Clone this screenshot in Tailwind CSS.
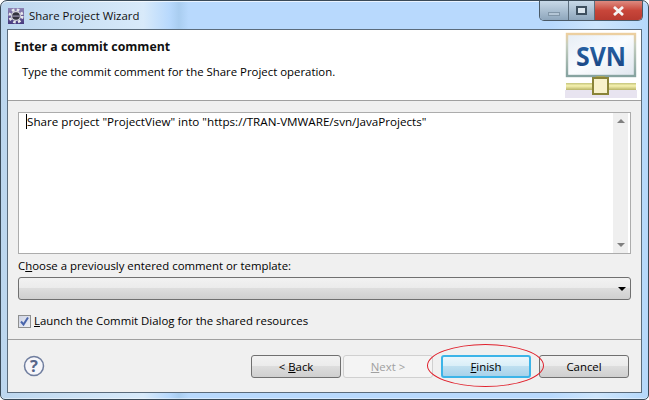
<!DOCTYPE html>
<html lang="en">
<head>
  <meta charset="UTF-8">
  <title>Share Project Wizard</title>
  <script src="https://cdn.jsdelivr.net/npm/@tailwindcss/browser@4"></script>
</head>
<body class="w-[649px] h-[400px] overflow-hidden bg-white font-['Open_Sans','Noto_Sans',sans-serif] text-[11.4px] leading-[16px] text-black">

  <!-- window frame -->
  <div class="w-[649px] h-[400px] flex flex-col rounded-t-[7px] rounded-b-[5px] border border-[#3a4a58] shadow-[inset_0_1px_0_#ffffffb0,inset_0_-1px_0_#ffffff70] bg-[linear-gradient(90deg,#bcd6ee_0%,#d8eafa_22%,#b8d9fd_26%,#a9cdf0_27.5%,#b8d9fd_29%,#b8d9fd_85%,#cde5fc_92%,#b5d8fb_100%)] px-[6px] pb-[6px]">

    <!-- title bar -->
    <div class="h-[28px] shrink-0 flex items-start">
      <svg class="mt-[7px] ml-[1px]" width="16" height="16" viewBox="0 0 16 16">
        <defs>
          <linearGradient id="iconbg" x1="0" y1="0" x2="0" y2="1"><stop offset="0" stop-color="#8e84b4"/><stop offset="1" stop-color="#46397e"/></linearGradient>
        </defs>
        <rect width="16" height="16" fill="url(#iconbg)"/>
        <circle cx="8" cy="8" r="6.3" fill="none" stroke="#e8e8ec" stroke-width="2.6" stroke-dasharray="2.6 2.35"/>
        <circle cx="8" cy="8" r="5" fill="#d4d4da"/>
        <circle cx="8" cy="8" r="3.8" fill="#34323e"/>
        <rect x="4.2" y="7.4" width="7.6" height="1.4" fill="#8a86a0"/>
      </svg>
      <span class="ml-[5px] mt-[7px] text-[#111]">Share Project Wizard</span>
      <div class="ml-auto mr-[-1px] flex h-[20px] w-[104px] rounded-b-[5px] border border-t-0 border-[#4a5a68] overflow-hidden">
        <div class="w-[29px] flex items-center justify-center bg-gradient-to-b from-[#c8d9e8] to-[#8ea6bc] border-r border-[#5c6e7e]">
          <div class="w-[12px] h-[4px] mt-[6px] bg-[#b4c6d6] border border-[#8196a8]"></div>
        </div>
        <div class="w-[26px] flex items-center justify-center bg-gradient-to-b from-[#c8d9e8] to-[#8ea6bc] border-r border-[#5c6e7e]">
          <div class="w-[11px] h-[9px] border-2 border-[#3e5060] bg-[#dce6ee]"></div>
        </div>
        <div class="flex-1 flex items-center justify-center bg-gradient-to-b from-[#dd8a80] via-[#c8463a] to-[#b83a30]">
          <svg width="13" height="10" viewBox="0 0 13 10"><path d="M2 1 L11 9 M11 1 L2 9" stroke="#f4f4f4" stroke-width="2.8"/></svg>
        </div>
      </div>
    </div>

    <!-- client area -->
    <div class="flex-1 min-h-0 flex flex-col border border-[#5b6c7c] bg-[#f0f0f0]">

      <!-- banner -->
      <div class="h-[71px] shrink-0 flex bg-white border-b border-[#a0a0a0]">
        <div class="flex-1 pl-[6px] pt-[9px]">
          <div class="font-bold text-[12.3px] text-[#111]">Enter a commit comment</div>
          <div class="ml-[8px] mt-[9px]">Type the commit comment for the Share Project operation.</div>
        </div>
        <svg class="mt-[2px] mr-[4px]" width="72" height="66" viewBox="0 0 72 66">
          <defs>
            <linearGradient id="screen" x1="0" y1="0" x2="1" y2="1"><stop offset="0" stop-color="#e6edf5"/><stop offset="0.5" stop-color="#fafcfe"/><stop offset="1" stop-color="#dfe6ee"/></linearGradient>
            <linearGradient id="frame" x1="0" y1="0" x2="0" y2="1"><stop offset="0" stop-color="#edcf9f"/><stop offset="0.25" stop-color="#c6cfc0"/><stop offset="1" stop-color="#86a3a0"/></linearGradient>
            <linearGradient id="letters" x1="0" y1="0" x2="0" y2="1"><stop offset="0" stop-color="#2c6cb0"/><stop offset="1" stop-color="#173f7c"/></linearGradient>
            <linearGradient id="bar" x1="0" y1="0" x2="0" y2="1"><stop offset="0" stop-color="#c4c47c"/><stop offset="0.4" stop-color="#f6f2b0"/><stop offset="1" stop-color="#b8b468"/></linearGradient>
          </defs>
          <rect x="0" y="58" width="72" height="8" fill="#e8e4f0"/>
          <rect x="2" y="2" width="68" height="42" fill="url(#screen)" stroke="url(#frame)" stroke-width="2.4"/>
          <text x="36" y="34" text-anchor="middle" font-family="Open Sans" font-weight="700" font-size="27" textLength="50" lengthAdjust="spacingAndGlyphs" fill="url(#letters)">SVN</text>
          <rect x="31" y="44" width="9" height="4" fill="#a8a860"/>
          <rect x="1" y="51" width="70" height="7" fill="url(#bar)"/>
          <rect x="28" y="46" width="15" height="16" fill="#f8f2cc" stroke="#8a8438" stroke-width="2"/>
        </svg>
      </div>

      <!-- form -->
      <div class="flex-1 min-h-0 px-[10px] pt-[11px]">
        <div class="h-[142px] flex bg-white border border-[#acacac]">
          <div class="flex-1 pl-[7px] pt-[1px] text-[11.65px]"><span class="border-l border-black">Share project "ProjectView" into "https://TRAN-VMWARE/svn/JavaProjects"</span></div>
          <div class="w-[15px] mr-[2px] flex flex-col justify-between items-center bg-[#efefef] py-[6px]">
            <div class="w-0 h-0 border-x-[4px] border-x-transparent border-b-[4px] border-b-[#808080]"></div>
            <div class="w-0 h-0 border-x-[4px] border-x-transparent border-t-[4px] border-t-[#808080]"></div>
          </div>
        </div>
        <div class="mt-[4px]">C<u>h</u>oose a previously entered comment or template:</div>
        <div class="mt-[3px] h-[23px] flex items-center justify-end pr-[4px] rounded-[3px] border border-[#707070] bg-[linear-gradient(#f2f2f2_0%,#ebebeb_48%,#dddddd_50%,#cfcfcf_100%)]">
          <div class="w-0 h-0 border-x-[4px] border-x-transparent border-t-[4px] border-t-black"></div>
        </div>
        <div class="mt-[13px] flex items-center">
          <div class="w-[13px] h-[13px] flex items-center justify-center border border-[#8e8f8f] bg-[linear-gradient(135deg,#cfd4e4,#eef0f6)]">
            <svg width="11" height="11" viewBox="0 0 11 11"><path d="M2 5.5 L4.5 8.5 L9 1.5" fill="none" stroke="#4a66ac" stroke-width="2"/></svg>
          </div>
          <span class="ml-[3px]"><u>L</u>aunch the Commit Dialog for the shared resources</span>
        </div>
      </div>

      <!-- button bar -->
      <div class="h-[53px] shrink-0 relative flex items-start border-t border-[#a0a0a0] pt-[15px] pl-[15px] pr-[12px]">
        <svg width="22" height="22" viewBox="0 0 22 22">
          <circle cx="11" cy="11" r="9.5" fill="#f6f6fa" stroke="#6f7d9e" stroke-width="1.5"/>
          <text x="11" y="16.8" text-anchor="middle" font-family="Open Sans" font-weight="700" font-size="16.5" fill="#56658a">?</text>
        </svg>
        <div class="ml-auto flex">
          <div class="w-[90px] h-[23px] flex items-center justify-center rounded-[3px] border border-[#707070] bg-[linear-gradient(#f2f2f2_0%,#ebebeb_48%,#dddddd_50%,#cfcfcf_100%)]">&lt; <u class="ml-[3px]">B</u>ack</div>
          <div class="ml-[2px] w-[90px] h-[23px] flex items-center justify-center rounded-[3px] border border-[#d0d0d0] bg-[#f4f4f4] text-[#a0a0a0]"><u>N</u>ext &gt;</div>
          <div class="ml-[8px] w-[90px] h-[23px] flex items-center justify-center rounded-[3px] border-2 border-[#3cb4e8] bg-[linear-gradient(#eaf6fc_0%,#d9eef8_48%,#bedff0_50%,#a8d2ea_100%)]"><u>F</u>inish</div>
          <div class="ml-[8px] w-[90px] h-[23px] flex items-center justify-center rounded-[3px] border border-[#707070] bg-[linear-gradient(#f2f2f2_0%,#ebebeb_48%,#dddddd_50%,#cfcfcf_100%)]">Cancel</div>
        </div>
        <!-- red annotation circled over the Finish button -->
        <div class="absolute left-[419px] top-[4px] w-[117px] h-[43px] rounded-[50%] border border-[#e0202c]"></div>
      </div>
    </div>
  </div>
</body>
</html>
